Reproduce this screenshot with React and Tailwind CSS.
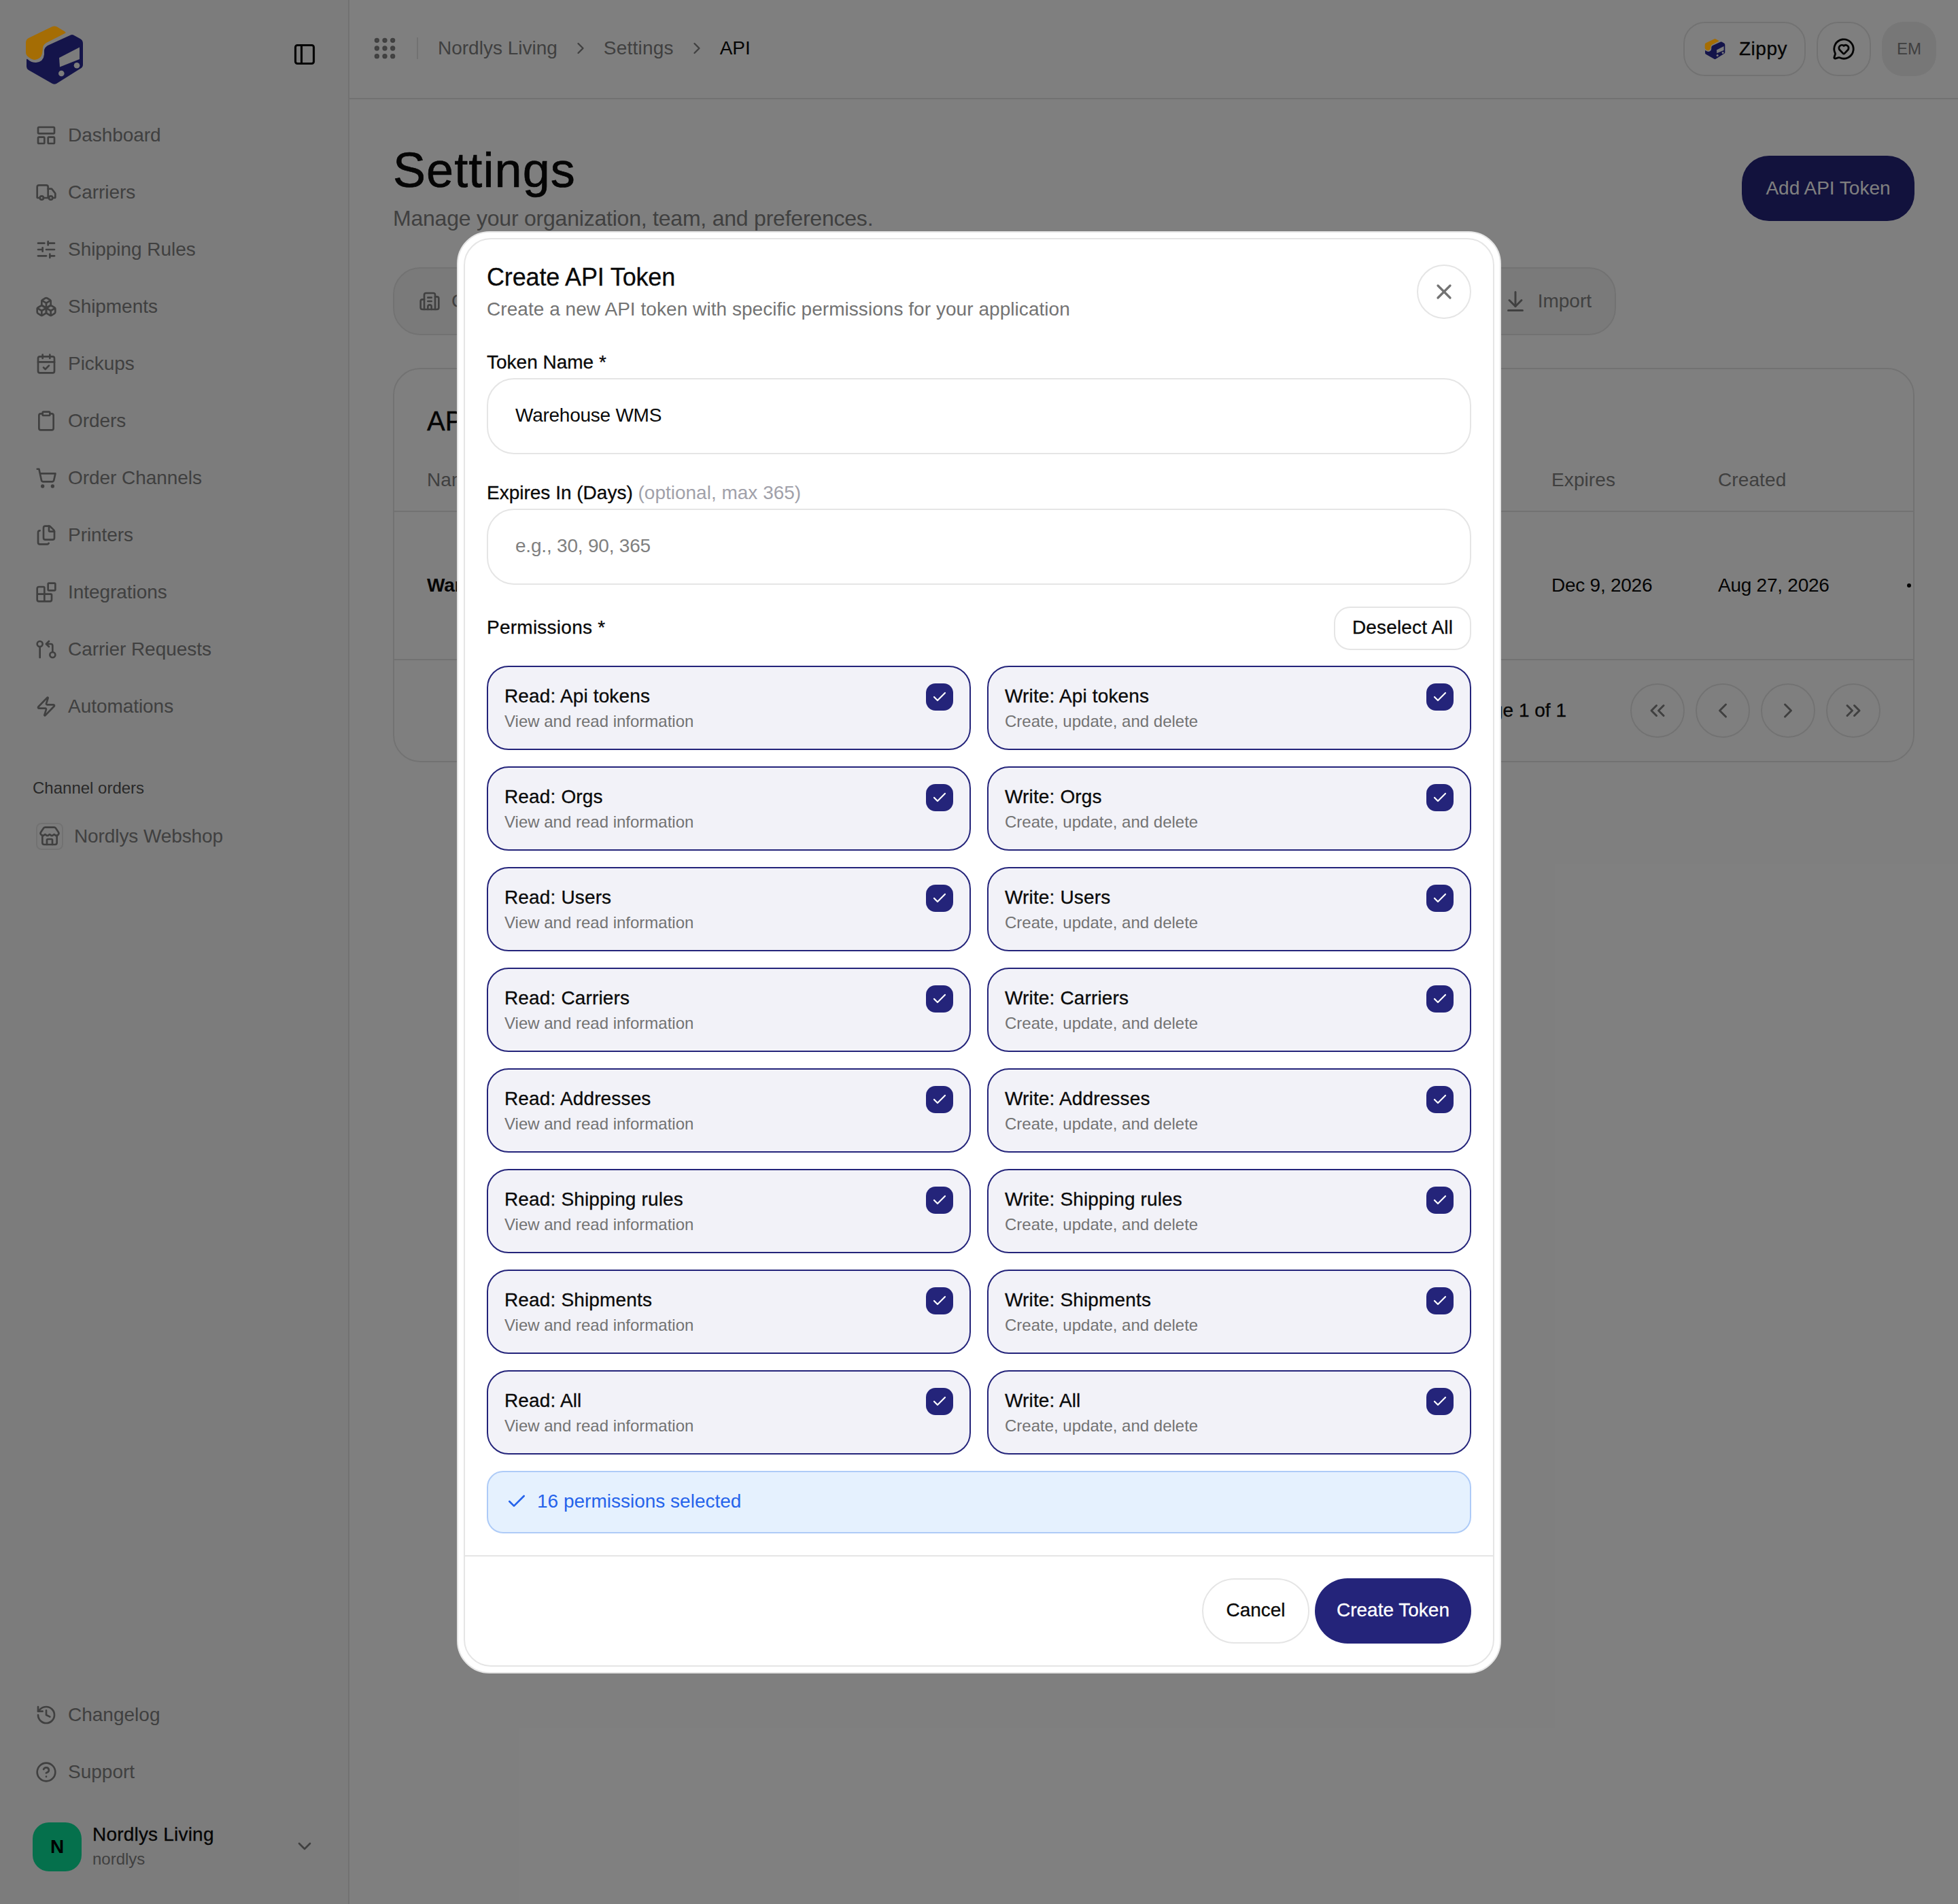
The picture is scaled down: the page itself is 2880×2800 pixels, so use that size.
import React from "react";
import {
  LayoutPanelTop, Truck, SlidersHorizontal, Boxes, CalendarCheck, Clipboard, ShoppingCart, Files, Blocks,
  GitPullRequestArrow, Zap, Store, History, CircleHelp, ChevronDown, ChevronRight, ChevronLeft, ChevronsLeft,
  ChevronsRight, PanelLeft, Grip, Building2, ArrowDownToLine, MessageCircleHeart, X, Check,
} from "lucide-react";

const nav = [
  ["Dashboard", LayoutPanelTop],
  ["Carriers", Truck],
  ["Shipping Rules", SlidersHorizontal],
  ["Shipments", Boxes],
  ["Pickups", CalendarCheck],
  ["Orders", Clipboard],
  ["Order Channels", ShoppingCart],
  ["Printers", Files],
  ["Integrations", Blocks],
  ["Carrier Requests", GitPullRequestArrow],
  ["Automations", Zap],
];

const perms = ["Api tokens", "Orgs", "Users", "Carriers", "Addresses", "Shipping rules", "Shipments", "All"];

function Logo({ className }) {
  return (
    <svg viewBox="36 35 88 90" className={`relative z-10 ${className}`}>
      <path
        d="M76 38.5 Q80 36.5 84 38.5 L95.5 45.5 Q97.5 47 95.5 48 L68 62 Q63 65 63 70 L62 78 Q60 86 51 87 Q47 87 42 83 Q38 80 38 76 L38 62 Q38 57 42 55 Z"
        fill="#a56d04"
      />
      <path
        d="M104 50.5 Q106 49.5 108 50.5 L118 56 Q122 58 122 63 L122 94 Q122 98 118 100 L83 122 Q80 123.5 77 122 L42 102 Q39 100 39 97 L39 87 Q39 85 41 86.5 Q46 91 53 91 Q64 90 65 79 L65 74 Q65 69 70 66 Z"
        fill="#14144a"
      />
      <path d="M87 84 L117 68.5 L117 86 L88 97.5 Z" fill="#7c7c7c" />
      <circle cx="90.3" cy="107" r="4.3" fill="#7c7c7c" />
      <circle cx="113" cy="95.3" r="4.3" fill="#7c7c7c" />
    </svg>
  );
}

function PermCard({ kind, name, desc }) {
  return (
    <div className="flex h-[124px] items-start justify-between rounded-[32px] border-2 border-[#24247a] bg-[#f2f2f8] p-[24px]">
      <div className="flex flex-col">
        <div className="pt-[1px] text-[28px] leading-[36px] tracking-[0.15px] text-[#0a0a0a] [-webkit-text-stroke:0.3px]">{kind}: {name}</div>
        <div className="mt-[1px] text-[24px] leading-[36px] text-[#737373]">{desc}</div>
      </div>
      <div className="flex h-[40px] w-[40px] items-center justify-center rounded-[14px] bg-[#24247a] text-white">
        <Check size={24} strokeWidth={2.2} />
      </div>
    </div>
  );
}

function Sidebar() {
  return (
    <aside className="flex h-[2800px] w-[514px] shrink-0 flex-col border-r-2 border-[#e5e5e5] bg-[#f8f8f8]">
      <div className="flex h-[157px] items-start justify-between pl-[36px] pr-[46px] pt-[36px]">
        <Logo className="h-[90px] w-[88px]" />
        <PanelLeft size={36} strokeWidth={2.1} className="mt-[26px] text-[#0a0a0a]" />
      </div>
      <nav className="flex flex-col">
        {nav.map(([label, Icon]) => (
          <div key={label} className="flex h-[84px] items-center gap-[16px] pl-[52px] text-[28px] tracking-[-0.05px] text-[#808080]">
            <Icon size={32} strokeWidth={2} />
            <span>{label}</span>
          </div>
        ))}
      </nav>
      <div className="mt-[61px] pl-[48px] text-[24px] leading-[34px] text-[#525252]">Channel orders</div>
      <div className="mt-[33px] flex items-center gap-[16px] pl-[53px] text-[28px] tracking-[-0.1px] text-[#808080]">
        <div className="flex h-[40px] w-[40px] items-center justify-center rounded-[8px] border-2 border-[#e5e5e5]">
          <Store size={32} strokeWidth={2} />
        </div>
        <span>Nordlys Webshop</span>
      </div>
      <div className="mt-auto flex flex-col">
        {[["Changelog", History], ["Support", CircleHelp]].map(([label, Icon]) => (
          <div key={label} className="flex h-[84px] items-center gap-[16px] pl-[52px] text-[28px] text-[#808080]">
            <Icon size={32} strokeWidth={2} />
            <span>{label}</span>
          </div>
        ))}
        <div className="mb-[48px] mt-[32px] flex items-center pl-[48px] pr-[48px]">
          <div className="flex h-[72px] w-[72px] items-center justify-center rounded-[24px] bg-[#0ae098] text-[28px] font-bold text-black">N</div>
          <div className="ml-[16px] flex flex-col">
            <span className="text-[28px] leading-[36px] tracking-[0.2px] text-[#0a0a0a] [-webkit-text-stroke:0.3px]">Nordlys Living</span>
            <span className="text-[24px] leading-[36px] text-[#808080]">nordlys</span>
          </div>
          <ChevronDown size={32} className="ml-auto mt-[-2px] text-[#808080]" />
        </div>
      </div>
    </aside>
  );
}

function Header() {
  return (
    <header className="flex h-[146px] items-start border-b-2 border-[#e5e5e5] px-[32px] pt-[32px]">
      <div className="flex h-[80px] items-center pb-[2px] text-[28px] text-[#808080]">
        <Grip size={40} strokeWidth={2.4} />
        <div className="mx-[27px] h-[32px] w-[2px] bg-[#e5e5e5]" />
        <span className="ml-[2px]">Nordlys Living</span>
        <ChevronRight size={28} className="mx-[20px]" />
        <span className="tracking-[0.2px]">Settings</span>
        <ChevronRight size={28} className="mx-[20px]" />
        <span className="text-[#0a0a0a]">API</span>
      </div>
      <div className="ml-auto flex items-center gap-[16px]">
        <div className="flex h-[80px] w-[180px] items-center gap-[20px] rounded-[32px] border-2 border-[#e5e5e5] pl-[29px] text-[28px] tracking-[0.5px] text-[#0a0a0a] [-webkit-text-stroke:0.3px]">
          <Logo className="h-[32px] w-[31px]" />
          <span>Zippy</span>
        </div>
        <div className="flex h-[80px] w-[80px] items-center justify-center rounded-[32px] border-2 border-[#e5e5e5] text-[#0a0a0a]">
          <MessageCircleHeart size={34} strokeWidth={2} />
        </div>
        <div className="flex h-[80px] w-[80px] items-center justify-center rounded-[32px] bg-[#eeeeee] text-[24px] text-[#808080]">EM</div>
      </div>
    </header>
  );
}

function PageBody() {
  return (
    <div className="px-[64px] pt-[64px]">
      <div className="flex items-center justify-between">
        <div>
          <h1 className="text-[72px] leading-[80px] tracking-[1.1px] text-[#0a0a0a] [-webkit-text-stroke:0.7px]">Settings</h1>
          <p className="mt-[9px] text-[32px] leading-[44px] tracking-[-0.22px] text-[#808080]">Manage your organization, team, and preferences.</p>
        </div>
        <div className="flex h-[96px] w-[254px] items-center justify-center rounded-[40px] bg-[#24247a] text-[28px] text-white">Add API Token</div>
      </div>
      <div className="mt-[50px] flex h-[100px] w-[1799px] items-center justify-between rounded-[40px] border-2 border-[#e5e5e5] bg-[#f5f5f5] pl-[36px] pr-[34px] text-[28px] text-[#808080]">
        <div className="flex items-center gap-[16px]">
          <Building2 size={32} />
          <span>Company</span>
        </div>
        <div className="flex items-center gap-[15px]">
          <ArrowDownToLine size={36} strokeWidth={2} />
          <span>Import</span>
        </div>
      </div>
      <div className="mt-[48px] h-[580px] overflow-hidden rounded-[40px] border-2 border-[#e5e5e5]">
        <div className="pl-[48px] pt-[52px] text-[40px] leading-[48px] text-[#0a0a0a] [-webkit-text-stroke:0.4px]">API Tokens</div>
        <div className="grid h-[110px] grid-cols-[1654px_245px_1fr] items-center border-b-2 border-[#e5e5e5] pl-[48px] pt-[18px] text-[28px] tracking-[0.1px] text-[#808080]">
          <span>Name</span>
          <span>Expires</span>
          <span>Created</span>
        </div>
        <div className="grid h-[218px] grid-cols-[1654px_245px_245px_1fr] items-center border-b-2 border-[#e5e5e5] pl-[48px] text-[28px] tracking-[-0.25px] text-[#0a0a0a]">
          <span className="font-bold">Warehouse WMS</span>
          <span>Dec 9, 2026</span>
          <span>Aug 27, 2026</span>
          <span className="mr-[3px] h-[6px] w-[6px] justify-self-end rounded-full bg-[#0a0a0a]" />
        </div>
        <div className="flex h-[148px] items-center justify-end gap-[16px] pr-[48px]">
          <span className="mr-[78px] text-[28px] text-[#0a0a0a] [-webkit-text-stroke:0.3px]">Page 1 of 1</span>
          {[ChevronsLeft, ChevronLeft, ChevronRight, ChevronsRight].map((Icon, i) => (
            <div key={i} className="flex h-[80px] w-[80px] items-center justify-center rounded-full border-2 border-[#e5e5e5] text-[#808080]">
              <Icon size={36} strokeWidth={2} />
            </div>
          ))}
        </div>
      </div>
    </div>
  );
}

function Modal() {
  return (
    <div className="absolute inset-0 flex items-start justify-center bg-black/50 pt-[340px]">
      <div className="w-[1536px] rounded-[48px] border-2 border-[#e5e5e5] bg-white p-[8px]">
        <div className="flex flex-col rounded-[40px] border-2 border-[#e5e5e5]">
          <div className="px-[32px] pt-[33px]">
            <div className="flex items-center justify-between">
              <div>
                <h2 className="pt-[1px] text-[36px] leading-[44px] tracking-[-0.15px] text-[#0a0a0a] [-webkit-text-stroke:0.3px]">Create API Token</h2>
                <p className="mt-[7px] text-[28px] leading-[36px] tracking-[0.05px] text-[#737373]">Create a new API token with specific permissions for your application</p>
              </div>
              <div className="flex h-[80px] w-[80px] items-center justify-center rounded-full border-2 border-[#e5e5e5] text-[#737373]">
                <X size={36} strokeWidth={2.2} />
              </div>
            </div>

            <div className="mt-[42px] text-[28px] leading-[36px] text-[#0a0a0a] [-webkit-text-stroke:0.3px]">Token Name *</div>
            <div className="mt-[5px] flex h-[112px] items-center rounded-[40px] border-2 border-[#e5e5e5] pb-[2px] pl-[40px] text-[28px] tracking-[-0.25px] text-[#0a0a0a]">Warehouse WMS</div>

            <div className="mt-[39px] text-[28px] leading-[36px] text-[#0a0a0a]">
              <span className="[-webkit-text-stroke:0.3px]">Expires In (Days)</span> <span className="text-[#a1a1aa]">(optional, max 365)</span>
            </div>
            <div className="mt-[5px] flex h-[112px] items-center rounded-[40px] border-2 border-[#e5e5e5] pb-[2px] pl-[40px] text-[28px] tracking-[-0.2px] text-[#808080]">e.g., 30, 90, 365</div>

            <div className="mt-[32px] flex h-[64px] items-center justify-between">
              <span className="pb-[2px] text-[28px] leading-[36px] tracking-[0.25px] text-[#0a0a0a] [-webkit-text-stroke:0.3px]">Permissions *</span>
              <div className="flex h-[64px] w-[202px] items-center justify-center rounded-[24px] border-2 border-[#e5e5e5] pb-[2px] text-[28px] tracking-[0.15px] text-[#0a0a0a] [-webkit-text-stroke:0.3px]">Deselect All</div>
            </div>

            <div className="mt-[23px] grid grid-cols-2 gap-[24px]">
              {perms.map((p) => (
                <React.Fragment key={p}>
                  <PermCard kind="Read" name={p} desc="View and read information" />
                  <PermCard kind="Write" name={p} desc="Create, update, and delete" />
                </React.Fragment>
              ))}
            </div>

            <div className="mt-[24px] flex h-[92px] items-center gap-[14px] rounded-[24px] border-2 border-[#aecbf7] bg-[#e5f1fe] pb-[2px] pl-[26px] text-[28px] text-[#2563eb]">
              <Check size={32} strokeWidth={2} />
              <span>16 permissions selected</span>
            </div>
          </div>

          <div className="mt-[32px] flex justify-end gap-[8px] border-t-2 border-[#e5e5e5] p-[32px]">
            <div className="flex h-[96px] w-[158px] items-center justify-center rounded-full border-2 border-[#e5e5e5] pb-[2px] text-[28px] text-[#0a0a0a] [-webkit-text-stroke:0.3px]">Cancel</div>
            <div className="flex h-[96px] w-[230px] items-center justify-center rounded-full bg-[#24247a] pb-[2px] text-[28px] text-white [-webkit-text-stroke:0.3px]">Create Token</div>
          </div>
        </div>
      </div>
    </div>
  );
}

export default function App() {
  return (
    <div className="relative flex h-[2800px] w-[2880px] overflow-hidden bg-white font-['Liberation_Sans',Arial,sans-serif]">
      <Sidebar />
      <main className="flex-1">
        <Header />
        <PageBody />
      </main>
      <Modal />
    </div>
  );
}
